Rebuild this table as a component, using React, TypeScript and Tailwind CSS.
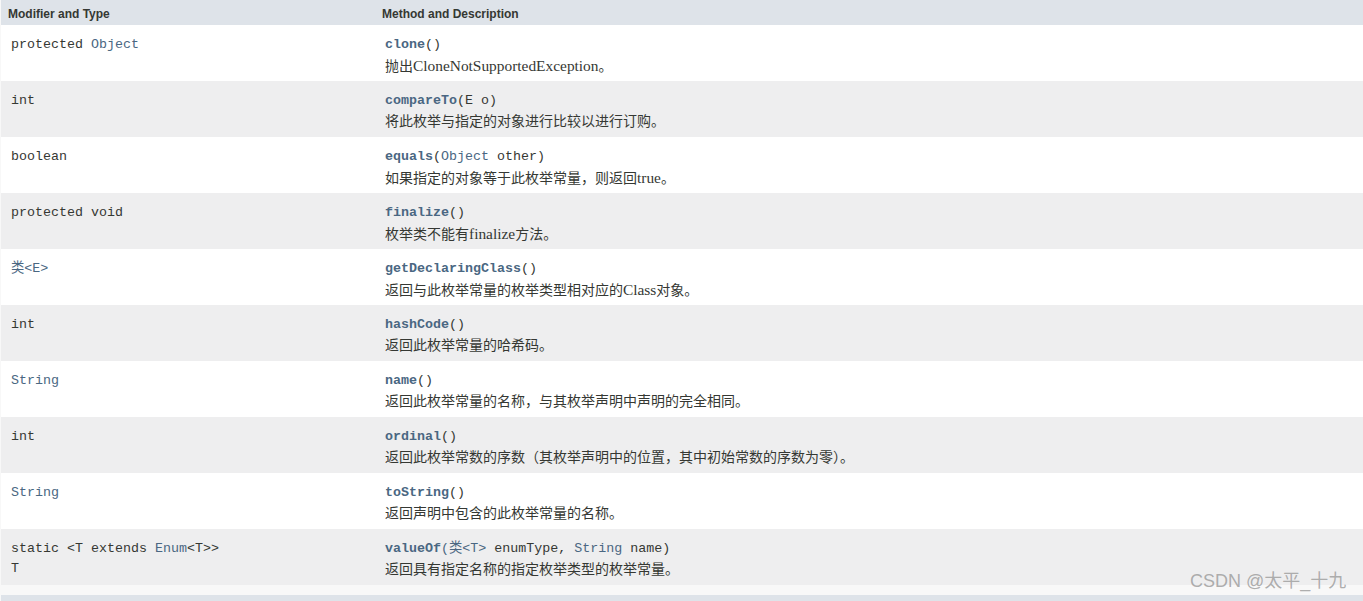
import React from "react";

// one segment of a code line: text + whether it's a link / bold
type Seg = { t: string; link?: boolean; bold?: boolean };

interface Row {
  type: Seg[][]; // lines in the left cell
  method: Seg[];
  desc: string;
}

const rows: Row[] = [
  {
    type: [[{ t: "protected " }, { t: "Object", link: true }]],
    method: [{ t: "clone", link: true, bold: true }, { t: "()" }],
    desc: "抛出CloneNotSupportedException。",
  },
  {
    type: [[{ t: "int" }]],
    method: [{ t: "compareTo", link: true, bold: true }, { t: "(E o)" }],
    desc: "将此枚举与指定的对象进行比较以进行订购。",
  },
  {
    type: [[{ t: "boolean" }]],
    method: [
      { t: "equals", link: true, bold: true },
      { t: "(" },
      { t: "Object", link: true },
      { t: " other)" },
    ],
    desc: "如果指定的对象等于此枚举常量，则返回true。",
  },
  {
    type: [[{ t: "protected void" }]],
    method: [{ t: "finalize", link: true, bold: true }, { t: "()" }],
    desc: "枚举类不能有finalize方法。",
  },
  {
    type: [[{ t: "类", link: true }, { t: "<E>", link: true }]],
    method: [{ t: "getDeclaringClass", link: true, bold: true }, { t: "()" }],
    desc: "返回与此枚举常量的枚举类型相对应的Class对象。",
  },
  {
    type: [[{ t: "int" }]],
    method: [{ t: "hashCode", link: true, bold: true }, { t: "()" }],
    desc: "返回此枚举常量的哈希码。",
  },
  {
    type: [[{ t: "String", link: true }]],
    method: [{ t: "name", link: true, bold: true }, { t: "()" }],
    desc: "返回此枚举常量的名称，与其枚举声明中声明的完全相同。",
  },
  {
    type: [[{ t: "int" }]],
    method: [{ t: "ordinal", link: true, bold: true }, { t: "()" }],
    desc: "返回此枚举常数的序数（其枚举声明中的位置，其中初始常数的序数为零）。",
  },
  {
    type: [[{ t: "String", link: true }]],
    method: [{ t: "toString", link: true, bold: true }, { t: "()" }],
    desc: "返回声明中包含的此枚举常量的名称。",
  },
  {
    type: [
      [{ t: "static <T extends " }, { t: "Enum", link: true }, { t: "<T>>" }],
      [{ t: "T" }],
    ],
    method: [
      { t: "valueOf", link: true, bold: true },
      { t: "(", link: true },
      { t: "类", link: true },
      { t: "<T>", link: true },
      { t: " enumType, " },
      { t: "String", link: true },
      { t: " name)" },
    ],
    desc: "返回具有指定名称的指定枚举类型的枚举常量。",
  },
];

const Code = ({ segs }: { segs: Seg[] }) => (
  <div className="font-['Liberation_Mono','Noto_Sans_CJK_SC',monospace] text-[13.33px] leading-[20px] whitespace-pre text-[#353833]">
    {segs.map((s, i) => (
      <span
        key={i}
        className={`${s.link ? "text-[#4a6782]" : ""} ${s.bold ? "font-bold" : ""}`}
      >
        {s.t}
      </span>
    ))}
  </div>
);

// latin words in the descriptions render a bit wider than the CJK text
const Desc = ({ text }: { text: string }) => (
  <div className="font-['Liberation_Serif','Noto_Sans_CJK_SC',serif] text-[14px] leading-[22px] text-[#353833]">
    {text.split(/([A-Za-z]+)/).map((part, i) =>
      /^[A-Za-z]+$/.test(part) ? (
        <span key={i} className="text-[15.4px]">
          {part}
        </span>
      ) : (
        <span key={i}>{part}</span>
      )
    )}
  </div>
);

export default function App() {
  return (
    <div className="relative w-[1363px] h-[601px] overflow-hidden bg-[#f8f8f8] pl-px">
      {/* header */}
      <div className="flex h-[25px] bg-[#dee3e9] font-['Liberation_Sans',sans-serif] text-[12px] font-bold text-[#353833]">
        <div className="w-[374px] pl-[7px] pt-[5px]">Modifier and Type</div>
        <div className="flex-1 pl-[7px] pt-[5px]">Method and Description</div>
      </div>

      {rows.map((r, i) => (
        <div
          key={i}
          className={`flex h-[56px] ${i % 2 === 0 ? "bg-white" : "bg-[#eeeeef]"}`}
        >
          <div className="w-[374px] pl-[10px] pt-[10px]">
            {r.type.map((line, j) => (
              <Code key={j} segs={line} />
            ))}
          </div>
          <div className="flex-1 pl-[10px] pt-[10px]">
            <Code segs={r.method} />
            <Desc text={r.desc} />
          </div>
        </div>
      ))}

      <div className="h-[10px]" />
      <div className="h-[10px] bg-[#dee3e9]" />

      {/* watermark */}
      <div className="absolute left-[1190px] top-[569px] font-['Liberation_Sans','Noto_Sans_CJK_SC',sans-serif] text-[18px] leading-[24px] text-[#9a9a9a]/80">
        CSDN @太平_十九
      </div>
    </div>
  );
}
